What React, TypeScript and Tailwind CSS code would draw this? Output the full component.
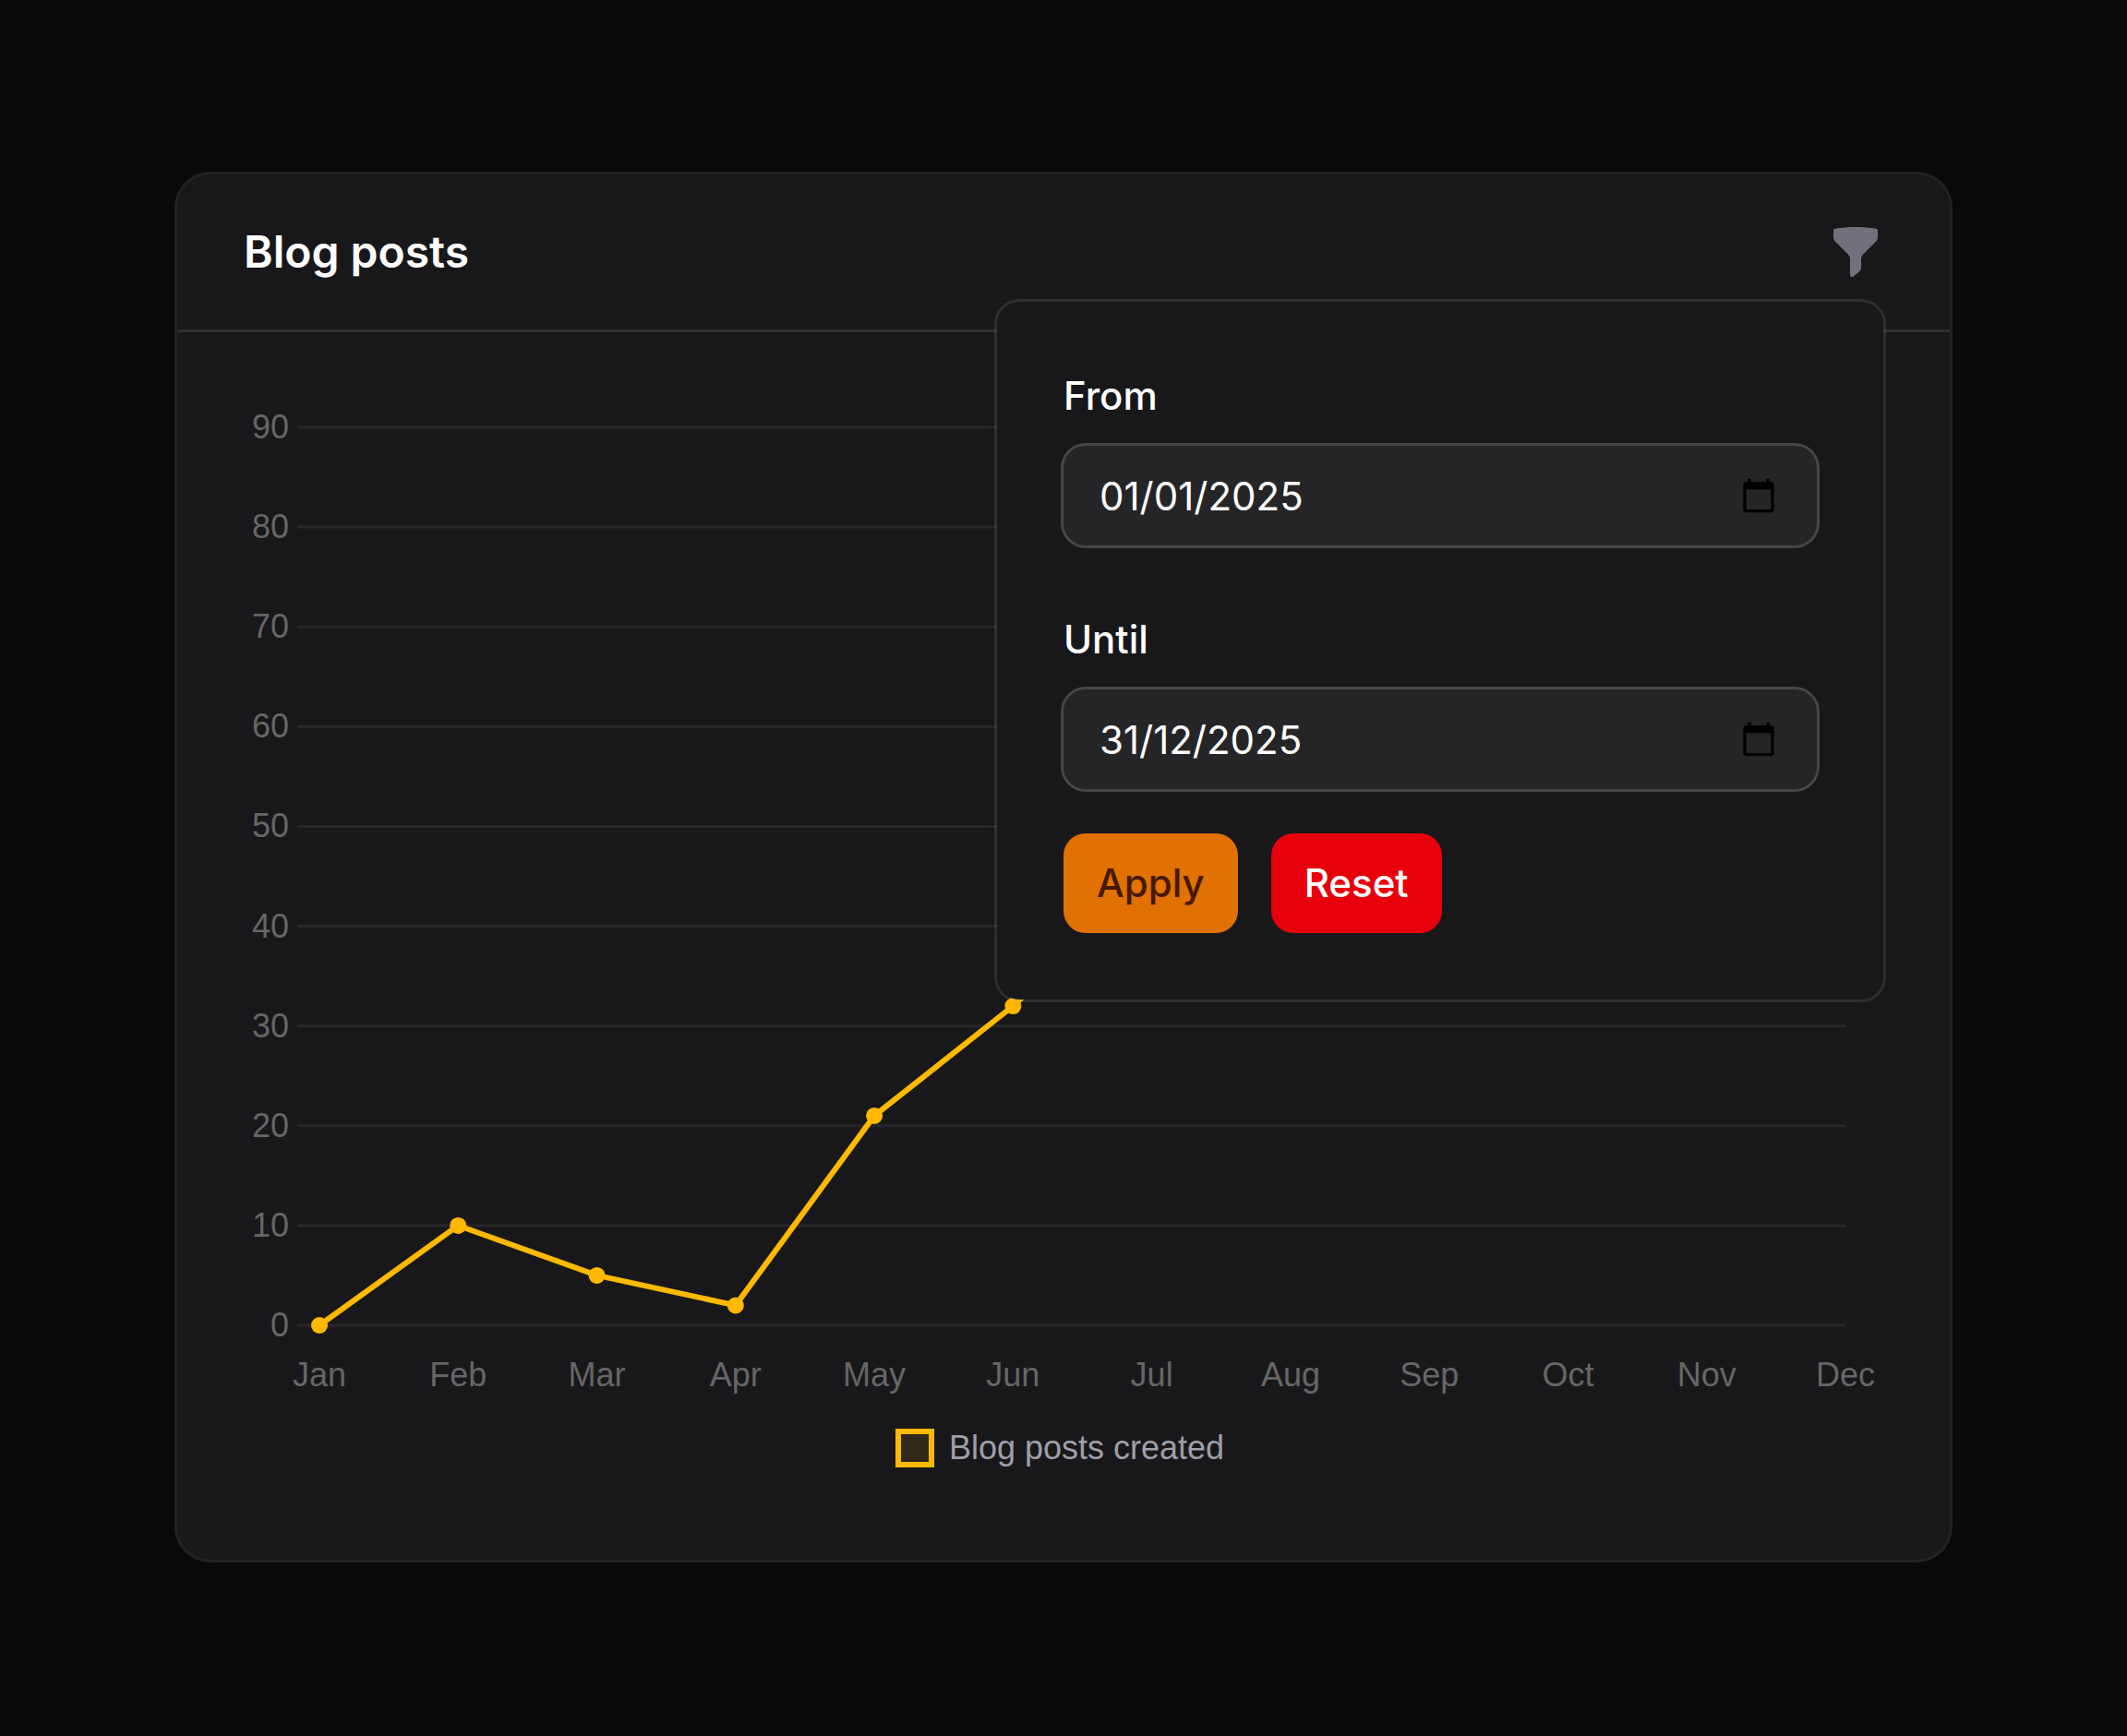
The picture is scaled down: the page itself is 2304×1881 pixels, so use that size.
/* Blog posts chart widget with the date filter dropdown open. */
import { useState } from 'react'

const months = ['Jan', 'Feb', 'Mar', 'Apr', 'May', 'Jun', 'Jul', 'Aug', 'Sep', 'Oct', 'Nov', 'Dec']
const posts = [0, 10, 5, 2, 21, 32, 45, 74, 65, 45, 77, 89]
const ticks = [0, 10, 20, 30, 40, 50, 60, 70, 80, 90]

// plot area, in viewBox units
const LEFT = 82
const RIGHT = 1735
const BASE = 1004
const TOP = 31

const x = (i: number) => LEFT + (i * (RIGHT - LEFT)) / (months.length - 1)
const y = (v: number) => BASE - (v * (BASE - TOP)) / 90

function FunnelIcon() {
  return (
    <svg viewBox="0 0 20 20" fill="currentColor" className="size-[60px]" aria-hidden>
      <path
        fillRule="evenodd"
        clipRule="evenodd"
        d="M2.628 1.601C5.028 1.206 7.49 1 10 1s4.973.206 7.372.601a.75.75 0 0 1 .628.74v2.288a2.25 2.25 0 0 1-.659 1.59l-4.682 4.683a2.25 2.25 0 0 0-.659 1.59v3.037c0 .684-.31 1.33-.844 1.757l-1.937 1.55A.75.75 0 0 1 8 18.25v-5.757a2.25 2.25 0 0 0-.659-1.591L2.659 6.22A2.25 2.25 0 0 1 2 4.629V2.34a.75.75 0 0 1 .628-.74Z"
      />
    </svg>
  )
}

function CalendarIcon() {
  return (
    <svg viewBox="0 0 24 24" fill="currentColor" className="size-10" aria-hidden>
      <path d="M20 3h-1V1h-2v2H7V1H5v2H4c-1.1 0-2 .9-2 2v16c0 1.1.9 2 2 2h16c1.1 0 2-.9 2-2V5c0-1.1-.9-2-2-2zm0 18H4V8h16v13z" />
    </svg>
  )
}

type DateFieldProps = {
  id: string
  label: string
  value: string
  onChange: (value: string) => void
}

function DateField({ id, label, value, onChange }: DateFieldProps) {
  return (
    <div className="flex flex-col gap-6">
      <label htmlFor={id} className="text-[42px] leading-[60px] font-medium text-white">
        {label}
      </label>
      <div className="flex h-[108px] items-center rounded-3xl bg-white/6 pr-[43px] ring-[3px] ring-white/20">
        <input
          id={id}
          type="text"
          inputMode="numeric"
          value={value}
          onChange={(e) => onChange(e.target.value)}
          className="h-full min-w-0 flex-1 bg-transparent pl-[39px] text-[42px] text-white outline-none"
        />
        <button type="button" aria-label={`Pick a date: ${label}`} className="text-black">
          <CalendarIcon />
        </button>
      </div>
    </div>
  )
}

function FilterPanel() {
  const [from, setFrom] = useState('01/01/2025')
  const [until, setUntil] = useState('31/12/2025')

  return (
    <form
      onSubmit={(e) => e.preventDefault()}
      className="absolute top-full right-0 z-10 mt-6 w-[960px] rounded-3xl bg-zinc-900 p-[72px] shadow-[0_12px_18px_-9px_rgba(0,0,0,0.1)] ring-[3px] ring-white/10"
    >
      <div className="flex flex-col gap-[72px]">
        <DateField id="from" label="From" value={from} onChange={setFrom} />
        <DateField id="until" label="Until" value={until} onChange={setUntil} />
      </div>
      <div className="mt-12 flex gap-9">
        <button
          type="submit"
          className="rounded-3xl bg-amber-600 px-9 py-6 text-[42px] leading-[60px] font-medium text-amber-950"
        >
          Apply
        </button>
        <button
          type="button"
          onClick={() => {
            setFrom('01/01/2025')
            setUntil('31/12/2025')
          }}
          className="rounded-3xl bg-red-600 px-9 py-6 text-[42px] leading-[60px] font-medium text-white"
        >
          Reset
        </button>
      </div>
    </form>
  )
}

function LineChart() {
  return (
    <svg
      viewBox="0 0 1776 1100"
      className="block w-full overflow-visible font-['Liberation_Sans',Arial,sans-serif] text-[36px]"
      role="img"
      aria-label="Blog posts created"
    >
      {ticks.map((t) => (
        <g key={t}>
          <line x1={58} x2={RIGHT} y1={y(t)} y2={y(t)} stroke="#27272a" strokeWidth={3} />
          <text x={49} y={y(t) + 12} textAnchor="end" fill="#666666">
            {t}
          </text>
        </g>
      ))}
      {months.map((m, i) => (
        <text key={m} x={x(i)} y={1070} textAnchor="middle" fill="#666666">
          {m}
        </text>
      ))}
      <polyline
        points={posts.map((v, i) => `${x(i)},${y(v)}`).join(' ')}
        fill="none"
        stroke="#ffb900"
        strokeWidth={6}
      />
      {posts.map((v, i) => (
        <circle key={months[i]} cx={x(i)} cy={y(v)} r={9} fill="#ffb900" />
      ))}
    </svg>
  )
}

export default function App() {
  const [open, setOpen] = useState(true)

  return (
    <main className="min-h-screen bg-zinc-950 px-48 py-[189px] font-[Inter,sans-serif]">
      <section className="rounded-[36px] bg-zinc-900 ring-[3px] ring-white/10">
        <header className="flex items-center justify-between border-b-[3px] border-white/10 px-[72px] py-12">
          <h2 className="text-[48px] leading-[72px] font-semibold text-white">Blog posts</h2>
          <div className="relative">
            <button
              type="button"
              aria-label="Filter"
              aria-expanded={open}
              onClick={() => setOpen(!open)}
              className="block text-zinc-500"
            >
              <FunnelIcon />
            </button>
            {open ? <FilterPanel /> : null}
          </div>
        </header>

        <div className="px-[72px] pt-[72px] pb-[100px]">
          <LineChart />
          <div className="mt-4 flex items-center justify-center gap-4 pr-2">
            <span className="size-[42px] border-[6px] border-[#ffb900] bg-[#ffb900]/10" />
            <span className="font-['Liberation_Sans',Arial,sans-serif] text-[36px] leading-[42px] text-zinc-400">
              Blog posts created
            </span>
          </div>
        </div>
      </section>
    </main>
  )
}
